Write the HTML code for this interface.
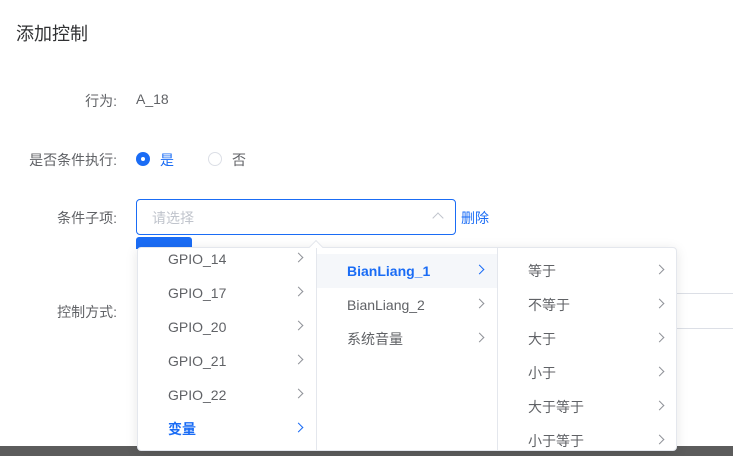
<!DOCTYPE html>
<html><head><meta charset="utf-8"><style>
*{margin:0;padding:0;box-sizing:border-box}
body{width:733px;height:456px;overflow:hidden;background:#fff;font-family:"Liberation Sans","Noto Sans CJK SC",sans-serif;font-size:14px;color:#606266;position:relative}
.a{position:absolute;white-space:nowrap}
.lbl{text-align:right;width:117px;left:0}
.col{position:absolute;top:0;bottom:0;overflow:hidden}
.it{position:absolute;left:0;right:0;height:34px;line-height:34px;padding-left:30px}
.ch{position:absolute;right:14px;top:12px;width:7px;height:7px;border-right:1px solid #909399;border-top:1px solid #909399;transform:rotate(45deg)}
.sel{color:#1a6cf5;font-weight:bold}
.sel .ch{border-color:#1a6cf5}
</style></head><body>
<div class="a" style="left:16px;top:20px;font-size:18px;color:#303133">添加控制</div>
<div class="a lbl" style="top:91px">行为:</div>
<div class="a" style="left:136px;top:91px">A_18</div>
<div class="a lbl" style="top:150px">是否条件执行:</div>
<div class="a" style="left:136px;top:152px;width:14px;height:14px;border-radius:50%;background:#1a6cf5"><div style="position:absolute;left:5px;top:5px;width:4px;height:4px;border-radius:50%;background:#fff"></div></div>
<div class="a" style="left:160px;top:150px;color:#1a6cf5">是</div>
<div class="a" style="left:208px;top:152px;width:14px;height:14px;border-radius:50%;border:1px solid #dcdfe6"></div>
<div class="a" style="left:232px;top:150px">否</div>
<div class="a lbl" style="top:208px">条件子项:</div>
<div class="a" style="left:136px;top:199px;width:320px;height:36px;border:1px solid #1a6cf5;border-radius:4px"></div>
<div class="a" style="left:152px;top:208px;color:#c0c4cc">请选择</div>
<div class="a" style="left:434px;top:214px;width:8px;height:8px;border-left:1px solid #c0c4cc;border-top:1px solid #c0c4cc;transform:rotate(45deg)"></div>
<div class="a" style="left:461px;top:208px;color:#1a6cf5">删除</div>
<div class="a lbl" style="top:302px">控制方式:</div>
<div class="a" style="left:677px;top:293px;width:56px;height:1px;background:#dcdfe6"></div>
<div class="a" style="left:677px;top:328px;width:56px;height:1px;background:#dcdfe6"></div>
<div class="a" style="left:0;top:446px;width:733px;height:10px;background:#5c5c5c"></div>
<div class="a" style="left:136px;top:237px;width:56px;height:12px;background:#1a6cf5;border-radius:3px 3px 0 0"></div>
<div class="a" style="left:137px;top:247px;width:540px;height:204px;background:#fff;border:1px solid #e4e7ed;border-radius:4px;box-shadow:0 2px 12px rgba(0,0,0,.1)">
 <div class="a" style="left:173px;top:-6px;width:10px;height:10px;background:#fff;border-left:1px solid #e4e7ed;border-top:1px solid #e4e7ed;transform:rotate(45deg)"></div>
 <div class="col" style="left:0;width:179px;border-right:1px solid #e4e7ed">
  <div class="it" style="top:-6px">GPIO_14<i class="ch"></i></div>
  <div class="it" style="top:28px">GPIO_17<i class="ch"></i></div>
  <div class="it" style="top:62px">GPIO_20<i class="ch"></i></div>
  <div class="it" style="top:96px">GPIO_21<i class="ch"></i></div>
  <div class="it" style="top:130px">GPIO_22<i class="ch"></i></div>
  <div class="it sel" style="top:164px">变量<i class="ch"></i></div>
 </div>
 <div class="col" style="left:179px;width:181px;border-right:1px solid #e4e7ed">
  <div class="it sel" style="top:6px;background:#f5f7fa">BianLiang_1<i class="ch"></i></div>
  <div class="it" style="top:40px">BianLiang_2<i class="ch"></i></div>
  <div class="it" style="top:74px">系统音量<i class="ch"></i></div>
 </div>
 <div class="col" style="left:360px;width:179px">
  <div class="it" style="top:6px">等于<i class="ch"></i></div>
  <div class="it" style="top:40px">不等于<i class="ch"></i></div>
  <div class="it" style="top:74px">大于<i class="ch"></i></div>
  <div class="it" style="top:108px">小于<i class="ch"></i></div>
  <div class="it" style="top:142px">大于等于<i class="ch"></i></div>
  <div class="it" style="top:176px">小于等于<i class="ch"></i></div>
 </div>
</div>
</body></html>
